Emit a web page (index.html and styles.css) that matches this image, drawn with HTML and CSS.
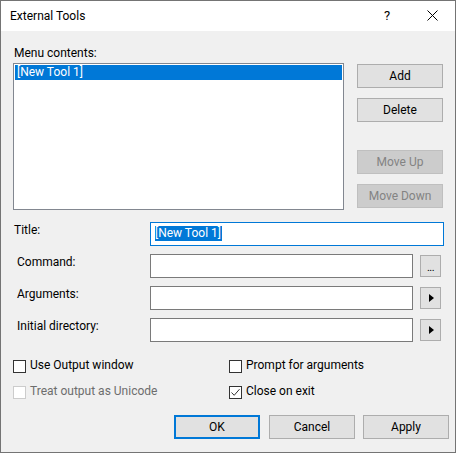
FILE: index.html
```html
<!DOCTYPE html>
<html>
<head>
<meta charset="utf-8">
<title>External Tools</title>
<link rel="stylesheet" href="styles.css">
</head>
<body>
<div class="window">
  <div class="titlebar">
    <span class="title">External Tools</span>
    <span class="help">?</span>
    <svg class="close" width="11" height="11" viewBox="0 0 11 11"><path d="M0.5 0.5L10.5 10.5M10.5 0.5L0.5 10.5" stroke="#000" stroke-width="1" fill="none"/></svg>
  </div>
  <div class="content">
    <div class="top">
      <div class="list-col">
        <div class="label">Menu contents:</div>
        <div class="listbox">
          <div class="list-item selected">[New Tool 1]</div>
        </div>
      </div>
      <div class="side-col">
        <div class="btn">Add</div>
        <div class="btn gap-sm">Delete</div>
        <div class="btn disabled gap-lg">Move Up</div>
        <div class="btn disabled gap-sm">Move Down</div>
      </div>
    </div>
    <div class="fields">
      <div class="row">
        <div class="field-label first">Title:</div>
        <div class="textbox wide focused"><span class="sel">[New Tool 1]</span></div>
      </div>
      <div class="row">
        <div class="field-label">Command:</div>
        <div class="textbox"></div>
        <div class="mini-btn"><span class="dots">...</span></div>
      </div>
      <div class="row">
        <div class="field-label">Arguments:</div>
        <div class="textbox"></div>
        <div class="mini-btn"><span class="arrow"></span></div>
      </div>
      <div class="row">
        <div class="field-label">Initial directory:</div>
        <div class="textbox"></div>
        <div class="mini-btn"><span class="arrow"></span></div>
      </div>
    </div>
    <div class="checks">
      <div class="check"><span class="box"></span><span class="check-text">Use Output window</span></div>
      <div class="check"><span class="box"></span><span class="check-text">Prompt for arguments</span></div>
      <div class="check disabled"><span class="box"></span><span class="check-text">Treat output as Unicode</span></div>
      <div class="check"><span class="box checked"><svg width="11" height="11" viewBox="0 0 11 11"><path d="M1.5 5.5L4.2 8.3L9.5 2.2" stroke="#333" stroke-width="1" fill="none"/></svg></span><span class="check-text">Close on exit</span></div>
    </div>
    <div class="actions">
      <div class="btn default">OK</div>
      <div class="btn cancel">Cancel</div>
      <div class="btn">Apply</div>
    </div>
  </div>
</div>
</body>
</html>
```

FILE: styles.css
```css
* { box-sizing: border-box; }

html, body {
  margin: 0;
  padding: 0;
  background: #ffffff;
}

body {
  font-family: Roboto, "Noto Sans", "Liberation Sans", sans-serif;
  font-size: 12px;
  line-height: 16px;
  color: #000;
}

.window {
  width: 456px;
  height: 453px;
  border: 1px solid #747474;
  background: #f0f0f0;
  display: flex;
  flex-direction: column;
}

.titlebar {
  height: 30px;
  background: #ffffff;
  display: flex;
  align-items: flex-start;
  padding: 7px 17px 0 9px;
  flex-shrink: 0;
}

.title {
  flex: 1;
}

.help {
  font-size: 13px;
  width: 12px;
  text-align: center;
  margin-top: 0;
}

.close {
  margin-left: 34px;
  margin-top: 2px;
}

.content {
  padding: 14px 6px 0 12px;
  display: flex;
  flex-direction: column;
}

.top {
  display: flex;
  align-items: flex-start;
  gap: 13px;
}

.list-col {
  width: 331px;
}

.label {
  padding-left: 1px;
}

.listbox {
  margin-top: 2px;
  height: 147px;
  background: #ffffff;
  border: 1px solid #828790;
  padding: 1px;
}

.list-item {
  height: 15px;
  line-height: 15px;
  padding-left: 2px;
}

.list-item.selected {
  background: #0078d7;
  color: #ffffff;
}

.side-col {
  margin-top: 19px;
  display: flex;
  flex-direction: column;
}

.btn {
  width: 86px;
  height: 24px;
  background: #e1e1e1;
  border: 1px solid #adadad;
  display: flex;
  align-items: center;
  justify-content: center;
  line-height: 16px;
}

.btn.gap-sm { margin-top: 10px; }
.btn.gap-lg { margin-top: 28px; }

.btn.disabled {
  background: #cccccc;
  border-color: #bfbfbf;
  color: #838383;
}

.btn.default {
  border: 2px solid #0078d7;
}

.fields {
  margin-top: 12px;
  display: flex;
  flex-direction: column;
  gap: 8px;
}

.row {
  display: flex;
  align-items: flex-start;
  height: 24px;
}

.field-label {
  width: 137px;
  padding-left: 4px;
  padding-top: 0;
}

.field-label.first {
  padding-left: 1px;
}

.textbox {
  width: 263px;
  height: 24px;
  background: #ffffff;
  border: 1px solid #7a7a7a;
  padding: 2px 0 0 4px;
}

.textbox.wide {
  width: 294px;
}

.textbox.focused {
  border-color: #0078d7;
}

.sel {
  display: inline-block;
  background: #0078d7;
  color: #ffffff;
  height: 15px;
  line-height: 15px;
  padding-right: 1px;
}

.mini-btn {
  width: 21px;
  height: 22px;
  margin-left: 7px;
  margin-top: 1px;
  background: #e1e1e1;
  border: 1px solid #adadad;
  display: flex;
  align-items: center;
  justify-content: center;
}

.dots {
  font-size: 11px;
  line-height: 11px;
  margin-top: 3px;
  letter-spacing: -0.5px;
}

.arrow {
  width: 0;
  height: 0;
  border-top: 4.5px solid transparent;
  border-bottom: 4.5px solid transparent;
  border-left: 5px solid #000;
  margin-left: 1px;
}

.checks {
  margin-top: 15px;
  display: grid;
  grid-template-columns: 216px auto;
  row-gap: 10px;
}

.check {
  display: flex;
  align-items: flex-start;
  height: 16px;
}

.box {
  width: 13px;
  height: 13px;
  margin-top: 3px;
  border: 1px solid #333333;
  background: #ffffff;
  display: flex;
  align-items: center;
  justify-content: center;
}

.box svg { display: block; }

.check-text {
  margin-left: 4px;
}

.check.disabled .box {
  border-color: #cccccc;
}

.check.disabled .check-text {
  color: #6d6d6d;
}

.actions {
  margin-top: 16px;
  display: flex;
  justify-content: flex-end;
}

.actions .btn.cancel {
  margin-left: 9px;
  margin-right: 8px;
}
```
